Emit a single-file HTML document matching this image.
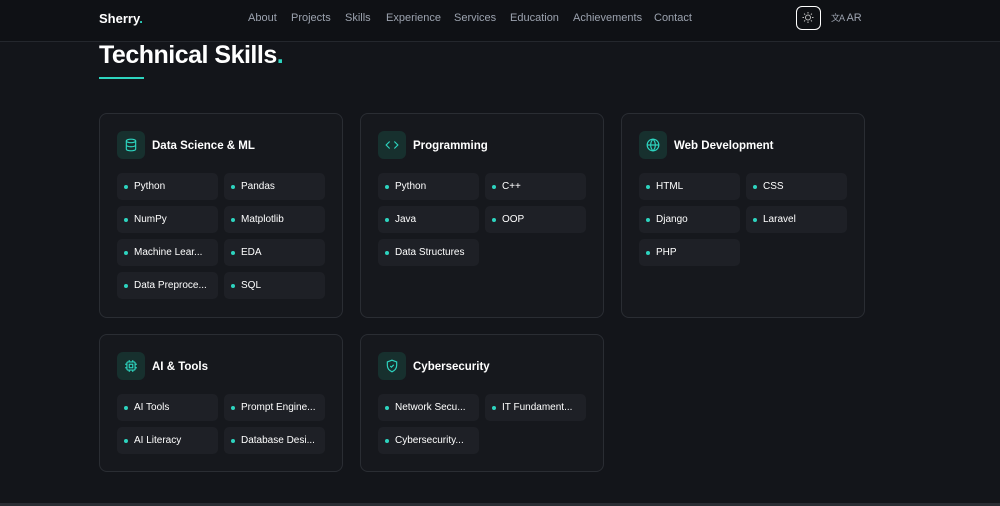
<!DOCTYPE html>
<html><head><meta charset="utf-8"><style>
*{margin:0;padding:0;box-sizing:border-box}
body{width:1000px;height:506px;background:#13151a;font-family:"Liberation Sans",sans-serif;color:#fff;position:relative;overflow:hidden}
.hdr{position:absolute;left:0;top:0;width:1000px;height:42px;background:#0f1115;border-bottom:1px solid #24272d}
.logo{position:absolute;left:99px;top:11px;font-size:13px;font-weight:bold}
.acc{color:#2dd4bf}
.nav{position:absolute;top:12px;font-size:11px;color:#9ca3af}
.theme{position:absolute;left:796px;top:6px;width:25px;height:24px;border:1.5px solid #fff;border-radius:6px}
.ar{position:absolute;left:831px;top:11px;font-size:11px;color:#9ca3af}
h1{position:absolute;left:99px;top:41px;font-size:25px;font-weight:bold;letter-spacing:-0.5px}
.ul{position:absolute;left:99px;top:77px;width:45px;height:2px;background:#2dd4bf}
.card{position:absolute;width:244px;background:#16181d;border:1px solid #2a2d33;border-radius:8px}
.ic{position:absolute;left:17px;top:17px;width:28px;height:28px;background:#17302e;border-radius:6px;display:flex;align-items:center;justify-content:center}
.ct{position:absolute;left:52px;top:25px;font-size:11.5px;line-height:14px;font-weight:bold}
.chip{position:absolute;width:101px;height:27px;background:#1e2026;border-radius:5px;font-size:10px;line-height:28px;padding-left:17px;white-space:nowrap;overflow:hidden}
.chip:before{content:"";position:absolute;left:7px;top:12px;width:4px;height:4px;border-radius:50%;background:#2dd4bf}
.bot{position:absolute;left:0;top:503px;width:1000px;height:3px;background:#2a2d33}
</style></head><body>
<div class="hdr">
<div class="logo">Sherry<span class="acc">.</span></div>
<div class="nav" style="left:248px">About</div>
<div class="nav" style="left:291px">Projects</div>
<div class="nav" style="left:345px">Skills</div>
<div class="nav" style="left:386px">Experience</div>
<div class="nav" style="left:454px">Services</div>
<div class="nav" style="left:510px">Education</div>
<div class="nav" style="left:573px">Achievements</div>
<div class="nav" style="left:654px">Contact</div>
<div class="theme"><svg width="22" height="21" viewBox="0 0 22 21"><circle cx="11" cy="10.5" r="2.5" fill="none" stroke="#bbb" stroke-width="1"/><g stroke="#bbb" stroke-width="1"><path d="M11 5v1.5M11 14.5V16M5.5 10.5H7M15 10.5h1.5M7.1 6.6l1 1M13.9 13.4l1 1M7.1 14.4l1-1M13.9 7.6l1-1"/></g></svg></div>
<div class="ar"><span style="font-size:9px;letter-spacing:-1px">文A</span> AR</div>
</div>
<h1>Technical Skills<span class="acc">.</span></h1>
<div class="ul"></div>

<div class="card" style="left:99px;top:113px;height:205px">
<div class="ic"><svg width="14" height="14" viewBox="0 0 24 24" fill="none" stroke="#2dd4bf" stroke-width="2"><ellipse cx="12" cy="5" rx="8" ry="3"/><path d="M4 5v14c0 1.7 3.6 3 8 3s8-1.3 8-3V5M4 12c0 1.7 3.6 3 8 3s8-1.3 8-3"/></svg></div>
<div class="ct">Data Science &amp; ML</div>
<div class="chip" style="left:17px;top:59px">Python</div><div class="chip" style="left:124px;top:59px">Pandas</div>
<div class="chip" style="left:17px;top:92px">NumPy</div><div class="chip" style="left:124px;top:92px">Matplotlib</div>
<div class="chip" style="left:17px;top:125px">Machine Lear...</div><div class="chip" style="left:124px;top:125px">EDA</div>
<div class="chip" style="left:17px;top:158px">Data Preproce...</div><div class="chip" style="left:124px;top:158px">SQL</div>
</div>

<div class="card" style="left:360px;top:113px;height:205px">
<div class="ic"><svg width="14" height="14" viewBox="0 0 24 24" fill="none" stroke="#2dd4bf" stroke-width="2"><path d="M8 6l-6 6 6 6M16 6l6 6-6 6"/></svg></div>
<div class="ct">Programming</div>
<div class="chip" style="left:17px;top:59px">Python</div><div class="chip" style="left:124px;top:59px">C++</div>
<div class="chip" style="left:17px;top:92px">Java</div><div class="chip" style="left:124px;top:92px">OOP</div>
<div class="chip" style="left:17px;top:125px">Data Structures</div>
</div>

<div class="card" style="left:621px;top:113px;height:205px">
<div class="ic"><svg width="14" height="14" viewBox="0 0 24 24" fill="none" stroke="#2dd4bf" stroke-width="2"><circle cx="12" cy="12" r="10"/><path d="M2 12h20M12 2c3 3 4 6.5 4 10s-1 7-4 10c-3-3-4-6.5-4-10s1-7 4-10z"/></svg></div>
<div class="ct">Web Development</div>
<div class="chip" style="left:17px;top:59px">HTML</div><div class="chip" style="left:124px;top:59px">CSS</div>
<div class="chip" style="left:17px;top:92px">Django</div><div class="chip" style="left:124px;top:92px">Laravel</div>
<div class="chip" style="left:17px;top:125px">PHP</div>
</div>

<div class="card" style="left:99px;top:334px;height:138px">
<div class="ic"><svg width="14" height="14" viewBox="0 0 24 24" fill="none" stroke="#2dd4bf" stroke-width="2"><rect x="5" y="5" width="14" height="14" rx="2"/><rect x="9" y="9" width="6" height="6"/><path d="M9 2v3M15 2v3M9 19v3M15 19v3M2 9h3M2 15h3M19 9h3M19 15h3"/></svg></div>
<div class="ct">AI &amp; Tools</div>
<div class="chip" style="left:17px;top:59px">AI Tools</div><div class="chip" style="left:124px;top:59px">Prompt Engine...</div>
<div class="chip" style="left:17px;top:92px">AI Literacy</div><div class="chip" style="left:124px;top:92px">Database Desi...</div>
</div>

<div class="card" style="left:360px;top:334px;height:138px">
<div class="ic"><svg width="14" height="14" viewBox="0 0 24 24" fill="none" stroke="#2dd4bf" stroke-width="2"><path d="M12 2l8 3v6c0 5-3.5 9-8 11-4.5-2-8-6-8-11V5z"/><path d="M9 12l2 2 4-4"/></svg></div>
<div class="ct">Cybersecurity</div>
<div class="chip" style="left:17px;top:59px">Network Secu...</div><div class="chip" style="left:124px;top:59px">IT Fundament...</div>
<div class="chip" style="left:17px;top:92px">Cybersecurity...</div>
</div>
<div class="bot"></div>
</body></html>
